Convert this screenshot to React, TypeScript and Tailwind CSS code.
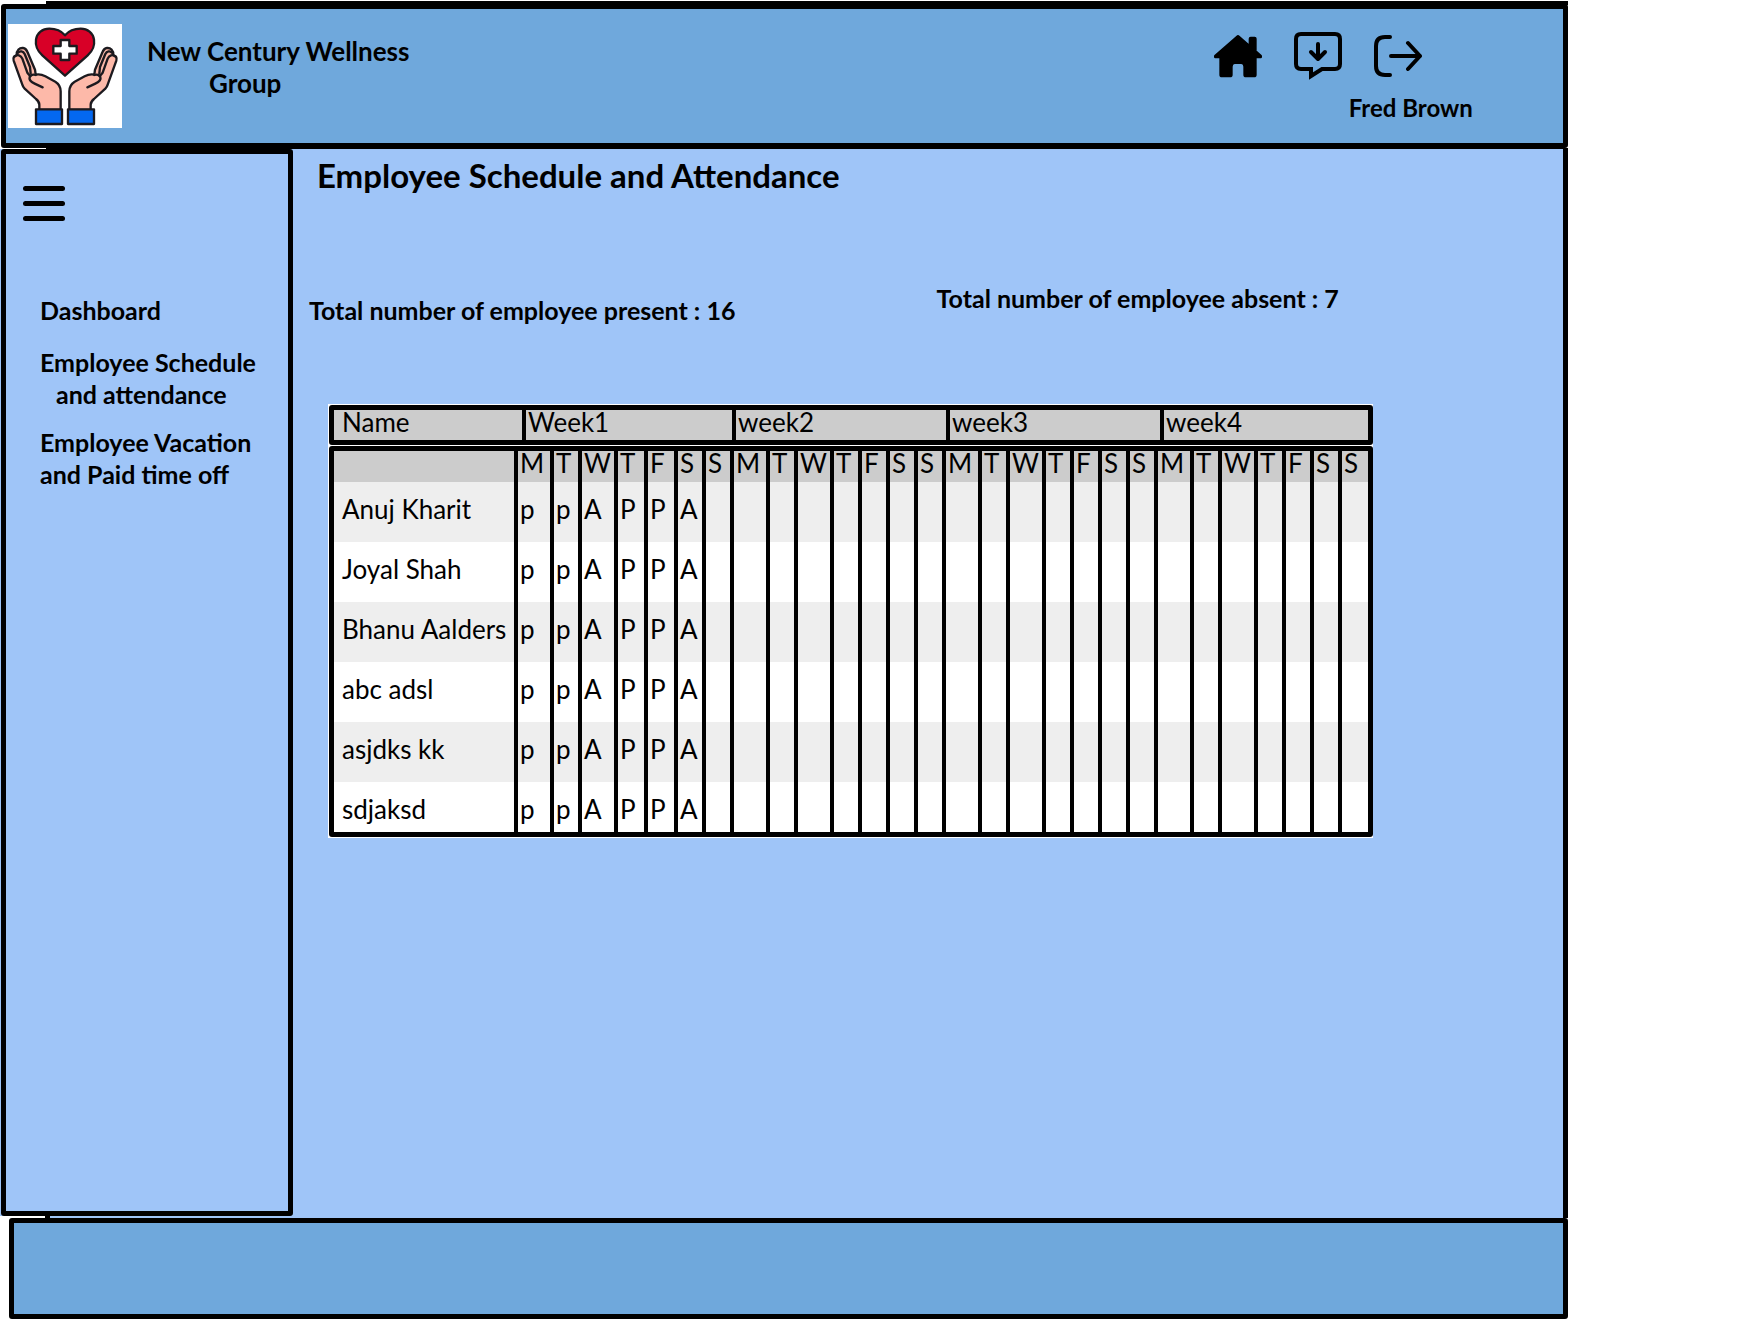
const DAY_COLUMNS = [
  ["M", "w-[36px]"], ["T", "w-[28px]"], ["W", "w-[36px]"], ["T", "w-[30px]"], ["F", "w-[30px]"], ["S", "w-[28px]"], ["S", "w-[28px]"],
  ["M", "w-[36px]"], ["T", "w-[28px]"], ["W", "w-[36px]"], ["T", "w-[28px]"], ["F", "w-[28px]"], ["S", "w-[28px]"], ["S", "w-[28px]"],
  ["M", "w-[36px]"], ["T", "w-[28px]"], ["W", "w-[36px]"], ["T", "w-[28px]"], ["F", "w-[28px]"], ["S", "w-[28px]"], ["S", "w-[28px]"],
  ["M", "w-[36px]"], ["T", "w-[28px]"], ["W", "w-[36px]"], ["T", "w-[28px]"], ["F", "w-[28px]"], ["S", "w-[28px]"], ["S", "w-auto"],
];

const EMPLOYEES = ["Anuj Kharit", "Joyal Shah", "Bhanu Aalders", "abc adsl", "asjdks kk", "sdjaksd"];
const ATTENDANCE = ["p", "p", "A", "P", "P", "A"];

function Hand() {
  return (
    <g stroke="#1c1a1f" strokeWidth="7" strokeLinejoin="round" strokeLinecap="round">
      <path
        fill="#fdb9a9"
        d="M94 258 V242 C94 234 90 230 84 225 L50 194 Q45 189 43 182 L17 110 C14 101 19 95 26 94 C25 78 35 71 45 72 C55 73 57 80 60 88 L81 137 L83 152 C96 149 103 152 112 157 L142 173 Q158 183 158 202 V258 Z"
      />
      <path fill="none" d="M19 98 C28 89 39 94 43 104 L58 146 L67 157" />
      <path fill="none" d="M28 88 C36 78 46 82 50 90 L66 129 L68 148" />
      <path fill="none" d="M104 190 L80 179 C67 173 62 168 65 159 C68 153 76 151 83 153" />
      <rect x="84" y="256" width="78" height="44" fill="#0468f0" />
    </g>
  );
}

function Logo() {
  return (
    <svg viewBox="0 0 342 312" className="h-[104px] w-[114px] shrink-0 bg-white" role="img" aria-label="New Century Wellness Group logo">
      <path
        d="M171 155 L103 94 C88 80 81 68 84 47 C87 27 103 14 124 14 C146 14 160 21 171 34 C182 21 196 14 218 14 C239 14 255 27 258 47 C261 68 254 80 239 94 Z"
        fill="#d80027" stroke="#1c1a1f" strokeWidth="7" strokeLinejoin="round"
      />
      <path
        d="M158 48 H184 V66 H206 V89 H184 V108 H158 V89 H136 V66 H158 Z"
        fill="#fff" stroke="#1c1a1f" strokeWidth="7" strokeLinejoin="round"
      />
      <Hand />
      <g transform="translate(342 0) scale(-1 1)">
        <Hand />
      </g>
    </svg>
  );
}

function HomeIcon() {
  return (
    <svg viewBox="0 0 144 144" className="size-12" fill="currentColor" stroke="currentColor" strokeWidth="8" strokeLinejoin="round" aria-hidden="true">
      <path d="M72 13 L108 44 V20 Q108 18 110 18 H122 Q124 18 124 20 V58 L140 72 V75 H124 V128 Q124 132 120 132 H96 Q92 132 92 128 V104 Q92 92 82 92 H62 Q52 92 52 104 V128 Q52 132 48 132 H24 Q20 132 20 128 V75 H4 V72 Z" />
    </svg>
  );
}

function MessageDownIcon() {
  return (
    <svg viewBox="0 0 48 48" className="size-12" fill="none" stroke="currentColor" strokeWidth="4" aria-hidden="true">
      <path d="M17 37 H7 Q2 37 2 32 V7 Q2 2 7 2 H41 Q46 2 46 7 V32 Q46 37 41 37 H28 L17 44 Z" />
      <path d="M24 12 V26 M17 20 L24 27 L31 20" strokeLinecap="round" strokeLinejoin="round" />
    </svg>
  );
}

function LogoutIcon() {
  return (
    <svg viewBox="0 0 48 48" className="size-12" fill="none" stroke="currentColor" strokeWidth="4" strokeLinecap="round" strokeLinejoin="round" aria-hidden="true">
      <path d="M16 5 H11 Q2 5 2 14 V34 Q2 43 11 43 H16" />
      <path d="M17 24 H46 M34 11 L46 24 L34 37" />
    </svg>
  );
}

function Header() {
  return (
    <header className="-mt-px ml-px flex justify-between rounded-[3px] border-[5px] border-black bg-[#6fa8dc] pb-[15px] font-bold">
      <div className="flex gap-[25px] pt-[15px] pl-0.5">
        <Logo />
        <p className="pt-[11px] text-[26px] leading-8">
          <span className="block">New Century Wellness</span>
          <span className="block pl-[62px]">Group</span>
        </p>
      </div>
      <div className="flex flex-col items-end pt-[23px] pr-[90px]">
        <nav aria-label="Shortcuts" className="mr-[51px] flex gap-8">
          <button type="button" aria-label="Home"><HomeIcon /></button>
          <button type="button" aria-label="Messages"><MessageDownIcon /></button>
          <button type="button" aria-label="Log out"><LogoutIcon /></button>
        </nav>
        <p className="pt-3 text-2xl leading-8">Fred Brown</p>
      </div>
    </header>
  );
}

function Sidebar() {
  return (
    <aside className="ml-px flex w-[292px] shrink-0 flex-col items-start rounded-[3px] border-[5px] border-black text-[25px] leading-8 font-bold">
      <button type="button" aria-label="Menu" className="mt-8 ml-[17px] flex flex-col gap-[10px]">
        <span className="h-[5px] w-[42px] rounded-full bg-black" />
        <span className="h-[5px] w-[42px] rounded-full bg-black" />
        <span className="h-[5px] w-[42px] rounded-full bg-black" />
      </button>
      <nav aria-label="Main" className="mt-[73px] ml-[34px] flex flex-col whitespace-nowrap">
        <a href="#dashboard">Dashboard</a>
        <a href="#schedule" className="mt-5">
          <span className="block">Employee Schedule</span>
          <span className="block pl-4">and attendance</span>
        </a>
        <a href="#vacation" className="mt-4">
          <span className="block">Employee Vacation</span>
          <span className="block">and Paid time off</span>
        </a>
      </nav>
    </aside>
  );
}

function WeekTable() {
  return (
    <div className="rounded-[3px] border-[5px] border-black bg-[#cccccc]">
      <table className="w-full table-fixed border-separate border-spacing-0 text-left leading-6">
        <colgroup>
          <col className="w-[188px]" />
          <col className="w-[210px]" />
          <col className="w-[214px]" />
          <col className="w-[214px]" />
          <col />
        </colgroup>
        <thead>
          <tr>
            <th scope="col" className="pb-1.5 pl-2 font-normal">Name</th>
            {["Week1", "week2", "week3", "week4"].map((week) => (
              <th key={week} scope="col" className="border-l-4 border-black pb-1.5 pl-0.5 font-normal">{week}</th>
            ))}
          </tr>
        </thead>
      </table>
    </div>
  );
}

function AttendanceTable() {
  return (
    <div className="rounded-[3px] border-[5px] border-black bg-white">
      <table className="w-full table-fixed border-separate border-spacing-0 text-left leading-8">
        <colgroup>
          <col className="w-[180px]" />
          {DAY_COLUMNS.map(([, width], i) => <col key={i} className={width} />)}
        </colgroup>
        <thead className="bg-[#cccccc] leading-6">
          <tr>
            <td />
            {DAY_COLUMNS.map(([day], i) => (
              <th key={i} scope="col" className="border-l-4 border-black pb-[7px] pl-0.5 font-normal">{day}</th>
            ))}
          </tr>
        </thead>
        <tbody>
          {EMPLOYEES.map((name, row) => {
            const pad = row === EMPLOYEES.length - 1 ? "pt-[11px] pb-[7px]" : "pt-[11px] pb-[17px]";
            return (
              <tr key={name} className="odd:bg-[#eeeeee]">
                <th scope="row" className={`pl-2 font-normal whitespace-nowrap ${pad}`}>{name}</th>
                {DAY_COLUMNS.map((_, i) => (
                  <td key={i} className={`border-l-4 border-black pl-0.5 ${pad}`}>{ATTENDANCE[i]}</td>
                ))}
              </tr>
            );
          })}
        </tbody>
      </table>
    </div>
  );
}

export default function App() {
  return (
    <div className="min-h-screen bg-white font-['Lato',sans-serif] text-black">
      <div className="flex min-h-screen w-[90%] flex-col pt-px">
        <div className="ml-[46px] h-1 bg-black" />
        <Header />
        <div className="ml-[46px] h-px bg-black" />
        <div className="flex flex-1 bg-[#9fc5f8]">
          <Sidebar />
          <main className="min-w-0 flex-1 border-r-[5px] border-black pr-[190px] text-[26px]">
            <h1 className="pt-[7px] pl-6 text-[33px] leading-[38px] font-bold">Employee Schedule and Attendance</h1>
            <div className="flex items-start justify-between pt-[88px] pr-[34px] pl-4 text-[25px] leading-8 font-bold">
              <p className="pt-3">Total number of employee present : 16</p>
              <p>Total number of employee absent : 7</p>
            </div>
            <div className="mt-[78px] ml-[35px] flex flex-col gap-px bg-white pt-px pb-px pl-px">
              <WeekTable />
              <AttendanceTable />
            </div>
          </main>
        </div>
        <div className="ml-[45px] h-0.5 border-x-[5px] border-black bg-[#9fc5f8]" />
        <footer className="mb-px ml-[9px] h-[101px] rounded-[3px] border-[5px] border-black bg-[#6fa8dc]" />
      </div>
    </div>
  );
}
